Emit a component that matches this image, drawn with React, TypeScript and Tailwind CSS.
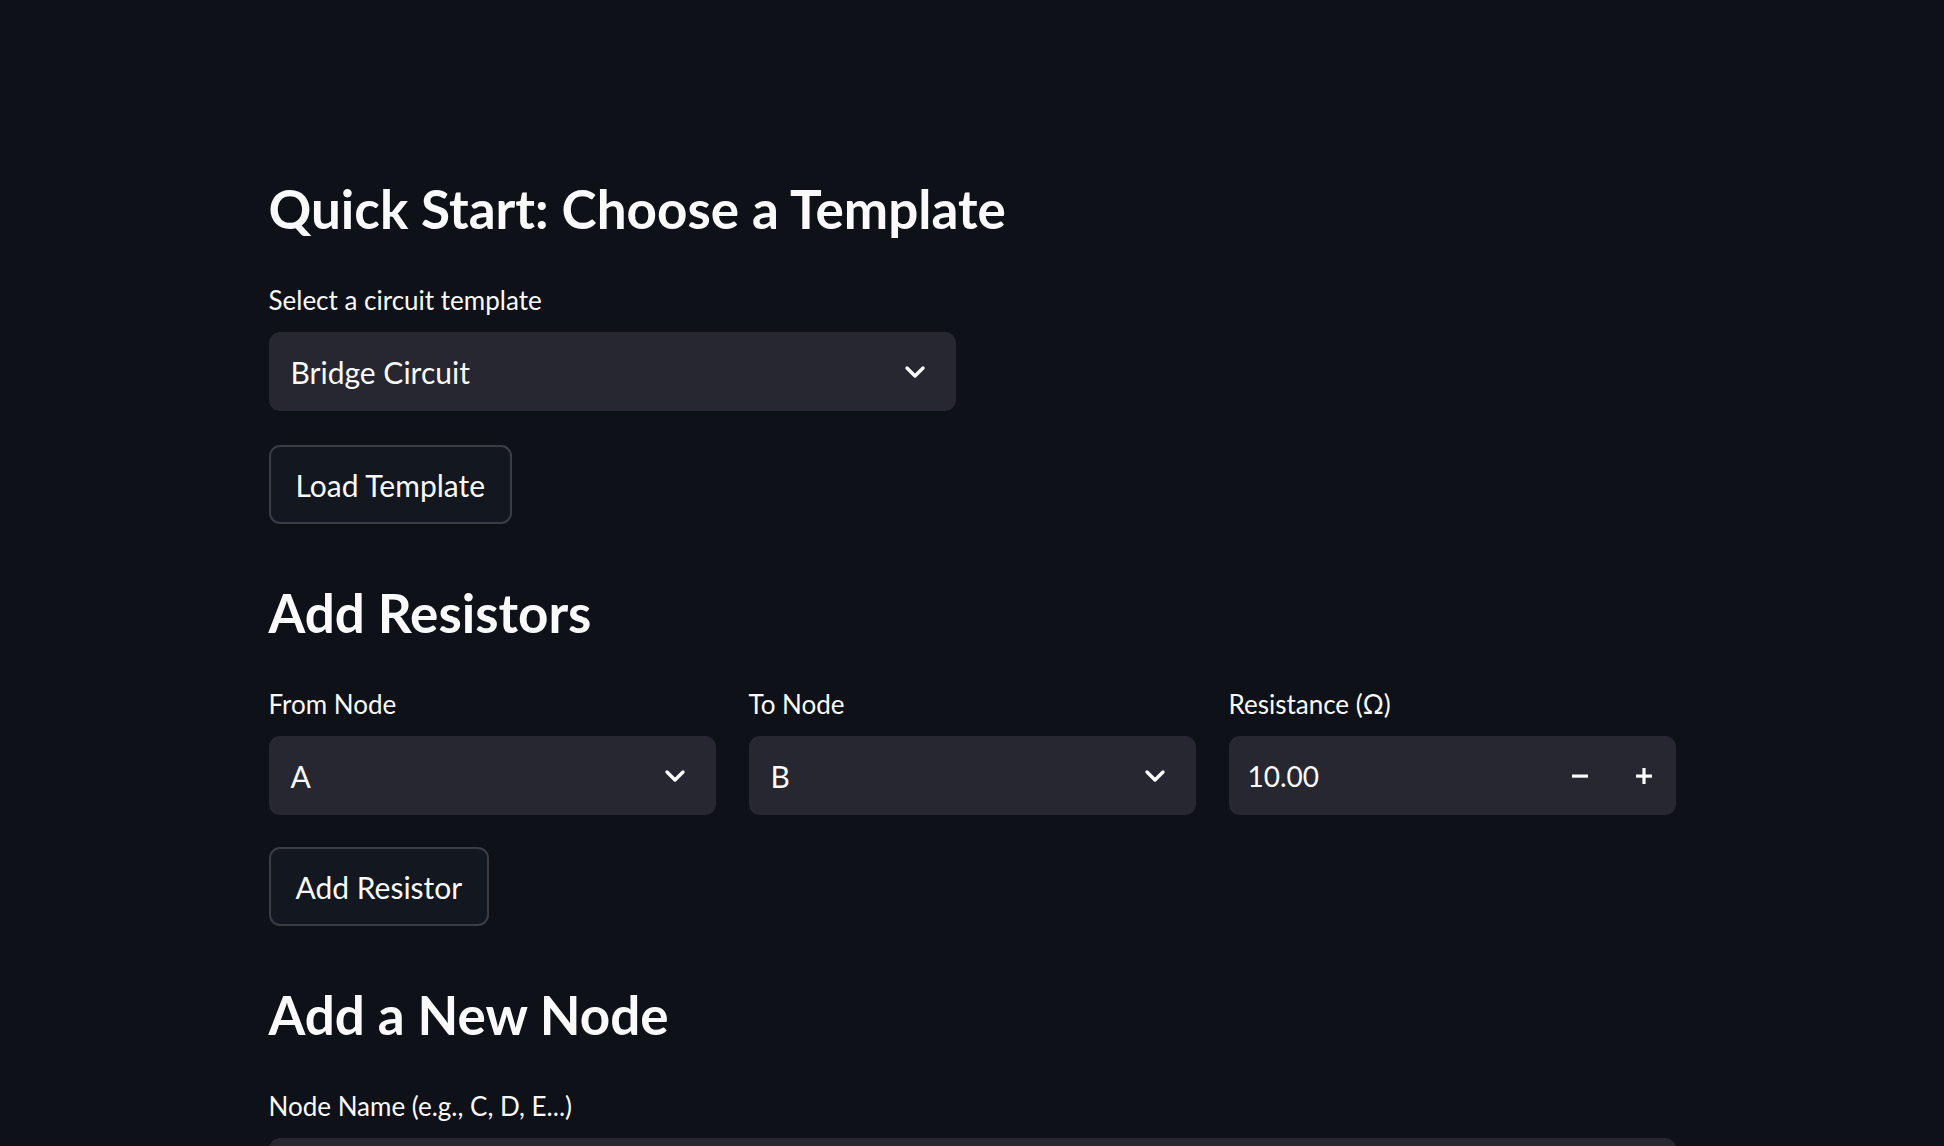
import React from "react";

const Chevron = () => (
  <svg width="22" height="14" viewBox="0 0 22 14" fill="none" stroke="#fafafa" strokeWidth="3.4" strokeLinecap="round" strokeLinejoin="round">
    <path d="M3 3l8 8 8-8" />
  </svg>
);

function Select({ value, className = "" }: { value: string; className?: string }) {
  return (
    <div className={"h-[79px] bg-[#262730] rounded-[11px] flex items-center justify-between pl-[22px] pr-[30px] " + className}>
      <span className="text-[30px] leading-none">{value}</span>
      <Chevron />
    </div>
  );
}

function Label({ children }: { children: React.ReactNode }) {
  return <div className="text-[26px] leading-[29px] mb-[17px]">{children}</div>;
}

function Button({ children }: { children: React.ReactNode }) {
  return (
    <button className="h-[79px] px-[25px] rounded-[11px] border-2 border-[#3a3d45] bg-[#131720] text-[30px] text-[#fafafa] leading-none">
      {children}
    </button>
  );
}

function H({ children, className = "" }: { children: React.ReactNode; className?: string }) {
  return <h2 className={"text-[53px] font-bold leading-[65px] " + className}>{children}</h2>;
}

export default function App() {
  return (
    <div className="min-h-screen bg-[#0e1117] text-[#fafafa] overflow-hidden" style={{ fontFamily: "Lato, 'Noto Sans', sans-serif" }}>
      <div className="w-[1407px] mx-auto pt-[176px] flex flex-col items-start">
        <H>Quick Start: Choose a Template</H>
        <div className="mt-[45px]">
          <Label>Select a circuit template</Label>
          <Select value="Bridge Circuit" className="w-[687px]" />
        </div>
        <div className="mt-[34px]">
          <Button>Load Template</Button>
        </div>
        <H className="mt-[56px]">Add Resistors</H>
        <div className="mt-[45px] w-full grid grid-cols-3 gap-[33px]">
          <div>
            <Label>From Node</Label>
            <Select value="A" />
          </div>
          <div>
            <Label>To Node</Label>
            <Select value="B" />
          </div>
          <div>
            <Label>Resistance (Ω)</Label>
            <div className="h-[79px] bg-[#262730] rounded-[11px] flex items-center pl-[19px]">
              <span className="text-[28px] leading-none flex-1">10.00</span>
              <div className="flex items-center h-full">
                <div className="w-[64px] h-full flex items-center justify-center">
                  <svg width="18" height="18" viewBox="0 0 18 18"><rect x="1" y="7.5" width="16" height="3.2" fill="#fafafa" /></svg>
                </div>
                <div className="w-[64px] h-full flex items-center justify-center">
                  <svg width="18" height="18" viewBox="0 0 18 18"><rect x="1" y="7.5" width="16" height="3.2" fill="#fafafa" /><rect x="7.4" y="1" width="3.2" height="16" fill="#fafafa" /></svg>
                </div>
              </div>
            </div>
          </div>
        </div>
        <div className="mt-[32px]">
          <Button>Add Resistor</Button>
        </div>
        <H className="mt-[56px]">Add a New Node</H>
        <div className="mt-[45px] w-full">
          <Label>Node Name (e.g., C, D, E...)</Label>
          <div className="h-[79px] bg-[#262730] rounded-[11px] w-full" />
        </div>
      </div>
    </div>
  );
}
